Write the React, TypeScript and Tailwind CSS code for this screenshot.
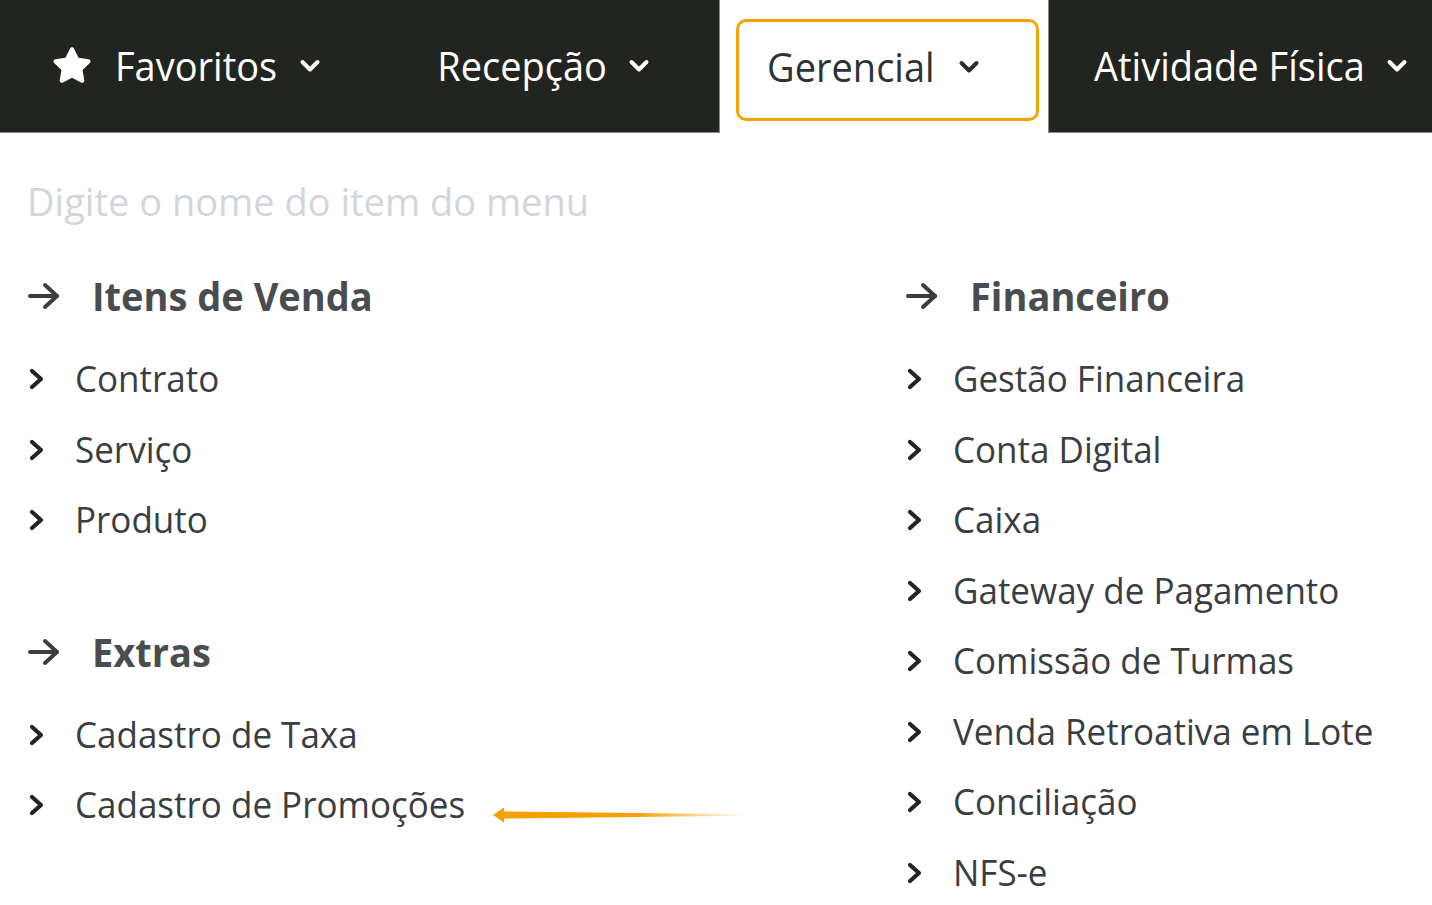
import React from "react";
import { FaStar } from "react-icons/fa";

const NavChevron = ({ color }: { color: string }) => (
  <svg width="22" height="16" viewBox="0 0 22 16" className="shrink-0">
    <polyline points="3.5,4 11,11.5 18.5,4" fill="none" stroke={color} strokeWidth="4" strokeLinecap="round" strokeLinejoin="round" />
  </svg>
);

const HeadArrow = () => (
  <svg width="34" height="28" viewBox="0 0 34 28" className="shrink-0">
    <g fill="none" stroke="#3b3e41" strokeWidth="4" strokeLinecap="round" strokeLinejoin="round">
      <line x1="3" y1="14" x2="30" y2="14" />
      <polyline points="18,3 30,14 18,25" />
    </g>
  </svg>
);

const ItemChevron = () => (
  <svg width="18" height="24" viewBox="0 0 18 24" className="shrink-0">
    <polyline points="4,4 13,12 4,20" fill="none" stroke="#222426" strokeWidth="4.2" strokeLinecap="round" strokeLinejoin="round" />
  </svg>
);

const Heading = ({ title, className = "" }: { title: string; className?: string }) => (
  <div className={"flex h-[60px] items-center " + className}>
    <HeadArrow />
    <span className="ml-[31px] inline-block origin-center scale-y-[1.05] pb-[2px] text-[38px] font-bold leading-none text-[#4a4d50]">{title}</span>
  </div>
);

const Item = ({ label }: { label: string }) => (
  <div className="flex h-[70.5px] items-center">
    <span className="ml-px flex w-[48px]">
      <ItemChevron />
    </span>
    <span className="-ml-px inline-block origin-center scale-y-[1.06] pb-[3px] text-[35px] leading-none text-[#3a3d41]">{label}</span>
  </div>
);

export default function App() {
  const font = { fontFamily: '"Open Sans", "Noto Sans", sans-serif' };
  return (
    <div className="relative h-[905px] w-[1432px] overflow-hidden bg-white" style={font}>
      {/* Top nav */}
      <div className="flex h-[133px]">
        <div className="flex w-[720px] items-center border-b border-r border-[#8a8c88] bg-[#222420] pb-[3px] text-white">
          <div className="ml-[52px] flex items-center">
            <FaStar className="h-[40px] w-[40px] text-white" />
            <span className="ml-[23px] inline-block scale-y-[1.06] text-[38px] leading-none">Favoritos</span>
            <span className="ml-[22px] mt-[2px]"><NavChevron color="#ffffff" /></span>
          </div>
          <div className="ml-[116px] flex items-center">
            <span className="inline-block scale-y-[1.06] text-[38px] leading-none">Recepção</span>
            <span className="ml-[21px] mt-[2px]"><NavChevron color="#ffffff" /></span>
          </div>
        </div>
        <div className="flex w-[328px] items-start bg-white">
          <div className="ml-[16px] mt-[19px] flex h-[102px] w-[303px] items-center rounded-[10px] border-[3px] border-[#f8a305] pb-[8px] pl-[28px]">
            <span className="inline-block scale-y-[1.06] text-[38px] leading-none text-[#2e3236]">Gerencial</span>
            <span className="ml-[23px] mt-[2px]"><NavChevron color="#2a2d30" /></span>
          </div>
        </div>
        <div className="flex flex-1 items-center border-b border-l border-[#8a8c88] bg-[#222420] pb-[3px] text-white">
          <div className="ml-[45px] flex items-center">
            <span className="inline-block scale-y-[1.06] text-[38px] leading-none">Atividade Física</span>
            <span className="ml-[21px] mt-[2px]"><NavChevron color="#ffffff" /></span>
          </div>
        </div>
      </div>

      {/* Search */}
      <div className="px-[27px] pt-[40px]">
        <input
          className="h-[60px] w-[700px] bg-transparent pb-[4px] text-[38px] leading-none text-[#3a3d41] outline-none placeholder:text-[#d2d6dc]"
          placeholder="Digite o nome do item do menu"
          style={font}
        />
      </div>

      {/* Columns */}
      <div className="mt-[33px] grid grid-cols-[878px_1fr] px-[27px]">
        <div>
          <Heading title="Itens de Venda" className="mb-[18px]" />
          <Item label="Contrato" />
          <Item label="Serviço" />
          <Item label="Produto" />
          <Heading title="Extras" className="mb-[18px] mt-[66px]" />
          <Item label="Cadastro de Taxa" />
          <Item label="Cadastro de Promoções" />
        </div>
        <div>
          <Heading title="Financeiro" className="mb-[18px]" />
          <Item label="Gestão Financeira" />
          <Item label="Conta Digital" />
          <Item label="Caixa" />
          <Item label="Gateway de Pagamento" />
          <Item label="Comissão de Turmas" />
          <Item label="Venda Retroativa em Lote" />
          <Item label="Conciliação" />
          <Item label="NFS-e" />
        </div>
      </div>

      {/* Annotation arrow */}
      <svg className="absolute left-[492px] top-[806px]" width="256" height="18" viewBox="0 0 256 18">
        <defs>
          <linearGradient id="shaft" x1="0" y1="0" x2="1" y2="0">
            <stop offset="0" stopColor="#f7a000" />
            <stop offset="0.55" stopColor="#f7a000" />
            <stop offset="1" stopColor="#f7a000" stopOpacity="0" />
          </linearGradient>
        </defs>
        <polygon points="11,5.5 253,8.2 253,9.8 11,12.5" fill="url(#shaft)" />
        <polygon points="1,9 12,1.5 12,16.5" fill="#f7a000" />
      </svg>
    </div>
  );
}
